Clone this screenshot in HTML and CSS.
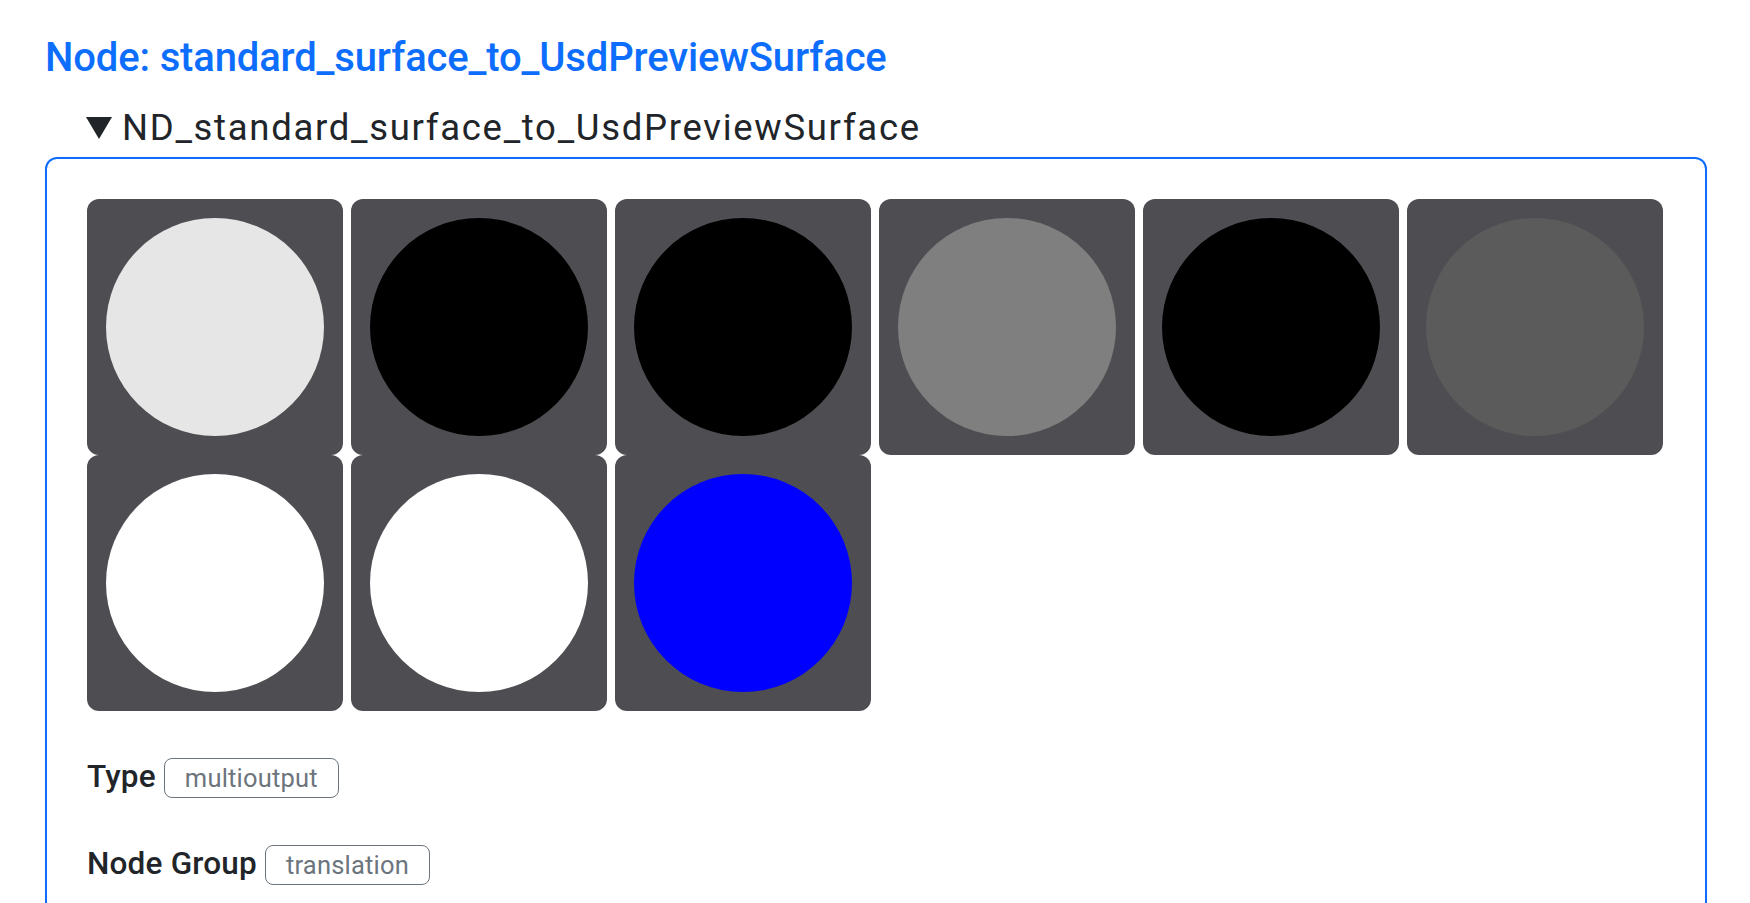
FILE: index.html
```html
<!DOCTYPE html>
<html lang="en">
<head>
<meta charset="utf-8">
<title>Node: standard_surface_to_UsdPreviewSurface</title>
<link rel="stylesheet" href="styles.css">
</head>
<body>
<main class="page">
  <h2 class="node-title">Node: standard_surface_to_UsdPreviewSurface</h2>
  <div class="nodedef">
    <div class="summary">
      <svg class="caret" width="26" height="22" viewBox="0 0 26 22" aria-hidden="true"><polygon points="0,0 26,0 13,22" fill="#212529"/></svg><span class="summary-text">ND_standard_surface_to_UsdPreviewSurface</span>
    </div>
    <div class="panel">
      <div class="swatches">
        <div class="swatch"><div class="ball" style="background:#e6e6e6"></div></div>
        <div class="swatch"><div class="ball" style="background:#000000"></div></div>
        <div class="swatch"><div class="ball" style="background:#000000"></div></div>
        <div class="swatch"><div class="ball" style="background:#7f7f7f"></div></div>
        <div class="swatch"><div class="ball" style="background:#000000"></div></div>
        <div class="swatch"><div class="ball" style="background:#5b5b5b"></div></div>
        <div class="swatch"><div class="ball" style="background:#ffffff"></div></div>
        <div class="swatch"><div class="ball" style="background:#ffffff"></div></div>
        <div class="swatch"><div class="ball" style="background:#0000ff"></div></div>
      </div>
      <div class="prop">
        <span class="prop-label">Type</span>
        <span class="badge">multioutput</span>
      </div>
      <div class="prop">
        <span class="prop-label">Node Group</span>
        <span class="badge">translation</span>
      </div>
    </div>
  </div>
</main>
</body>
</html>
```
FILE: styles.css
```css
* { box-sizing: border-box; }

html, body {
  margin: 0;
  padding: 0;
  background: #ffffff;
}

body {
  font-family: Roboto, "Liberation Sans", Arial, sans-serif;
  color: #212529;
}

.page {
  padding: 33px 43px 0 45px;
}

.node-title {
  margin: 0;
  font-size: 40px;
  line-height: 50px;
  font-weight: 500;
  letter-spacing: -0.15px;
  color: #0d6efd;
}

.nodedef {
  margin-top: 23px;
}

.summary {
  padding-left: 41px;
  font-size: 36.5px;
  line-height: 1.2;
  font-weight: 400;
  letter-spacing: 1.7px;
  color: #212529;
  white-space: nowrap;
}

.caret {
  vertical-align: 1.5px;
  margin-right: 10px;
}

.panel {
  margin-top: 7px;
  border: 2px solid #0d6efd;
  border-radius: 12px;
  padding: 40px;
  min-height: 800px;
}

.swatches {
  display: flex;
  flex-wrap: wrap;
  column-gap: 8px;
  row-gap: 0;
}

.swatch {
  width: 256px;
  height: 256px;
  background: #4e4d52;
  border-radius: 12px;
  display: flex;
  align-items: center;
  justify-content: center;
}

.ball {
  width: 218px;
  height: 218px;
  border-radius: 50%;
}

.prop {
  display: flex;
  align-items: baseline;
  gap: 8px;
  margin-top: 47px;
}

.prop-label {
  font-size: 31.5px;
  line-height: 1.2;
  font-weight: 500;
  letter-spacing: 0.2px;
  color: #212529;
}

.badge {
  display: inline-block;
  border: 1.5px solid #6c757d;
  border-radius: 8px;
  padding: 4px 20px;
  font-size: 25.5px;
  line-height: 30px;
  letter-spacing: 0.2px;
  color: #6c757d;
}
```
